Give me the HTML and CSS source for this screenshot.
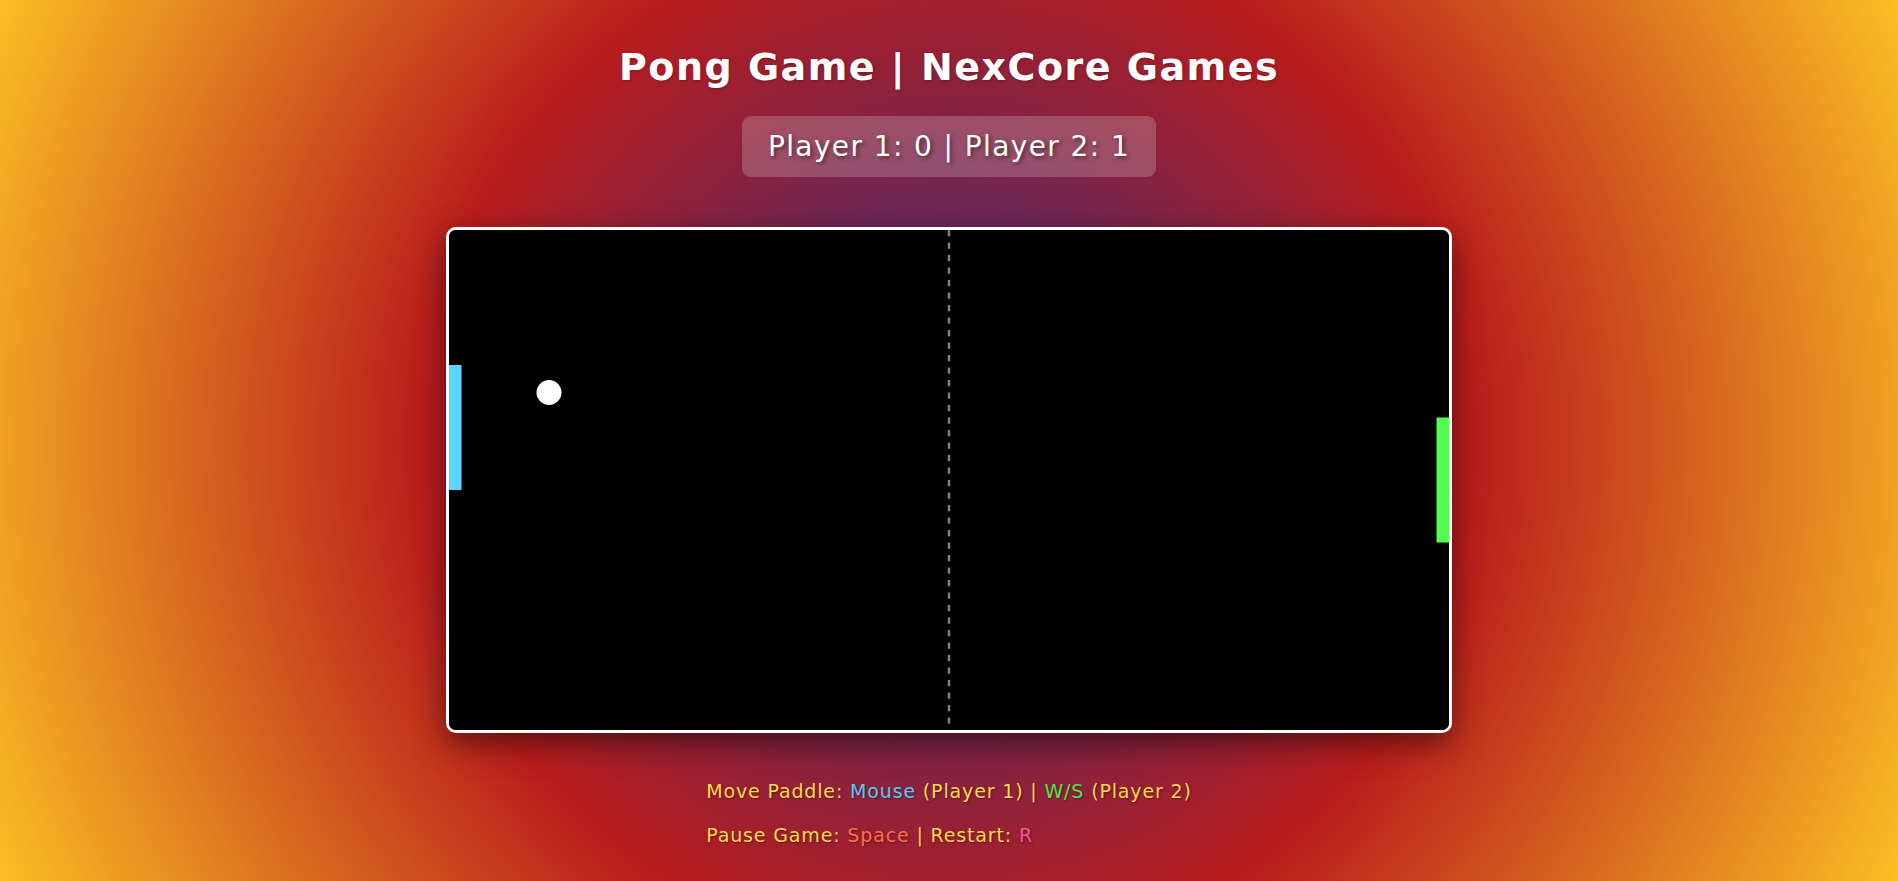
FILE: index.html
```html
<!DOCTYPE html>
<html lang="en">
<head>
<meta charset="UTF-8">
<title>Pong Game | NexCore Games</title>
<link rel="stylesheet" href="styles.css">
</head>
<body>
  <main class="page">
    <h1 class="title">Pong Game | NexCore Games</h1>
    <div class="score">Player 1: 0 | Player 2: 1</div>
    <div class="board">
      <svg class="field" width="1000" height="500" viewBox="0 0 800 400" xmlns="http://www.w3.org/2000/svg">
        <rect x="0" y="0" width="800" height="400" fill="#000"/>
        <line x1="400" y1="0" x2="400" y2="396" stroke="rgba(255,255,255,0.5)" stroke-width="2" stroke-dasharray="5 5"/>
        <rect x="0" y="108" width="10" height="100" fill="#5ad6ff"/>
        <rect x="790" y="150" width="10" height="100" fill="#55fe55"/>
        <circle cx="80" cy="130" r="10" fill="#fff"/>
      </svg>
    </div>
    <div class="controls">
      <p class="line">Move Paddle: <span class="k-mouse">Mouse</span> (Player 1) | <span class="k-ws">W/S</span> (Player 2)</p>
      <p class="line">Pause Game: <span class="k-space">Space</span> | Restart: <span class="k-r">R</span></p>
    </div>
  </main>
</body>
</html>
```

FILE: styles.css
```css
html, body {
  margin: 0;
  padding: 0;
  height: 100%;
}

body {
  font-family: "DejaVu Sans", Verdana, sans-serif;
  color: #fff;
  background: radial-gradient(circle at 50% 50%, #312e81 0%, #b91c1c 50%, #fbbf24 100%);
  overflow: hidden;
}

.page {
  min-height: 100vh;
  box-sizing: border-box;
  padding-top: 20px;
  display: flex;
  flex-direction: column;
  align-items: center;
  text-align: center;
}

.title {
  margin: 26px 0 0;
  font-size: 38px;
  line-height: 43px;
  letter-spacing: 1.5px;
  font-weight: bold;
  text-shadow: 1px 1px 3px rgba(0, 0, 0, 0.25);
}

.score {
  margin-top: 27px;
  height: 61px;
  box-sizing: border-box;
  padding: 0 26px;
  display: flex;
  align-items: center;
  font-size: 28px;
  letter-spacing: 1.4px;
  background: rgba(255, 255, 255, 0.2);
  border-radius: 9px;
  text-shadow: 2px 2px 4px rgba(0, 0, 0, 0.5);
}

.board {
  margin-top: 50px;
  border: 3px solid #fff;
  border-radius: 10px;
  overflow: hidden;
  background: #000;
  box-shadow: 0 10px 30px rgba(0, 0, 0, 0.5);
  line-height: 0;
}

.field {
  display: block;
}

.controls {
  margin-top: 45px;
  font-size: 19px;
  letter-spacing: 0.85px;
  color: #ffd94a;
  text-align: left;
  text-shadow: 1px 1px 2px rgba(0, 0, 0, 0.4);
}

.line {
  margin: 0 0 18px;
  line-height: 26px;
}

.k-mouse { color: #55c9f6; }
.k-ws { color: #4ee44e; }
.k-space { color: #ff6f45; }
.k-r { color: #f9539a; }
```
